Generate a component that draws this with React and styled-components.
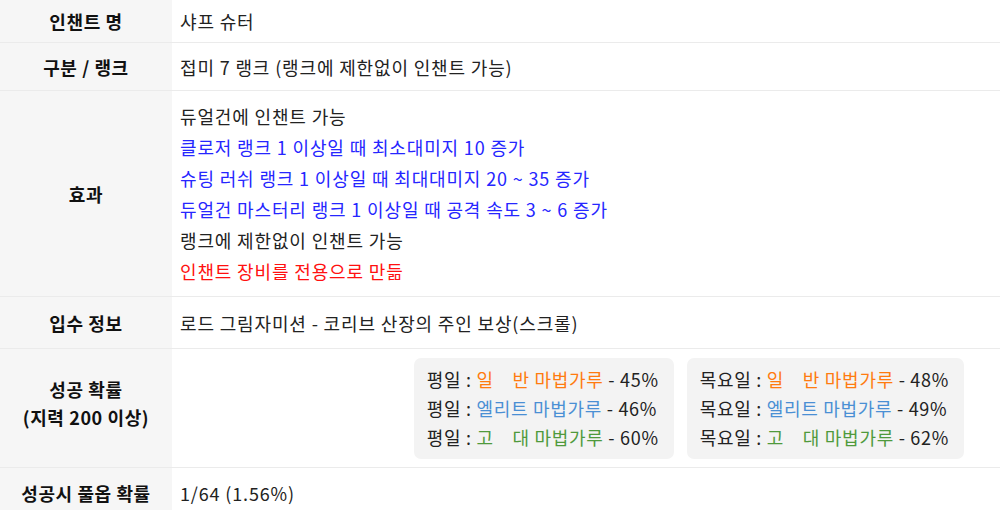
import React from "react";
import styled, { createGlobalStyle } from "styled-components";

const Global = createGlobalStyle`
  *, *::before, *::after { box-sizing: border-box; }
  html, body { margin: 0; padding: 0; background: #fff; }
  body {
    font-family: "Noto Sans CJK KR", "Noto Sans", sans-serif;
    font-size: 18px;
    letter-spacing: 0.85px;
    color: #222;
  }
`;

const Table = styled.div`
  width: 1000px;
  display: flex;
  flex-direction: column;
`;

const Row = styled.div`
  display: grid;
  grid-template-columns: 172px 1fr;
  border-bottom: 1px solid #ebebeb;
  min-height: ${(p) => p.$h}px;
`;

const Label = styled.div`
  background: #f6f6f6;
  color: #111;
  font-weight: 700;
  letter-spacing: 0.6px;
  display: flex;
  align-items: center;
  justify-content: center;
  text-align: center;
  line-height: 28px;
  padding-bottom: ${(p) => p.$lift || 0}px;
`;

const Value = styled.div`
  display: flex;
  flex-direction: column;
  justify-content: center;
  padding: ${(p) => p.$pad || "0 8px"};
  line-height: ${(p) => p.$lh || 24}px;
`;

const Line = styled.div`
  color: ${(p) => p.$c || "#222"};
`;

const BoxWrap = styled.div`
  display: flex;
  justify-content: flex-end;
  align-items: center;
  gap: 13px;
  padding-right: 36px;
`;

const Box = styled.div`
  background: #f3f3f3;
  border-radius: 7px;
  padding: 7px 15px 7px 13px;
  line-height: 29px;
  letter-spacing: 0.7px;
  min-height: 101px;
`;

const Powder = styled.span`
  color: ${(p) => p.$c};
  white-space: pre;
`;

const ORANGE = "#ff7b0f";
const SKY = "#4a8fd4";
const GREEN = "#4f9a3c";

const rates = [
  { day: "평일", items: [["일    반", ORANGE, "45%"], ["엘리트", SKY, "46%"], ["고    대", GREEN, "60%"]] },
  { day: "목요일", items: [["일    반", ORANGE, "48%"], ["엘리트", SKY, "49%"], ["고    대", GREEN, "62%"]] },
];

export default function App() {
  return (
    <>
      <Global />
      <Table>
        <Row $h={43}>
          <Label>인챈트 명</Label>
          <Value>샤프 슈터</Value>
        </Row>
        <Row $h={48}>
          <Label>구분 / 랭크</Label>
          <Value>접미 7 랭크 (랭크에 제한없이 인챈트 가능)</Value>
        </Row>
        <Row $h={206}>
          <Label>효과</Label>
          <Value $pad="10px 8px 9px" $lh={31}>
            <Line>듀얼건에 인챈트 가능</Line>
            <Line $c="#2626ff">클로저 랭크 1 이상일 때 최소대미지 10 증가</Line>
            <Line $c="#2626ff">슈팅 러쉬 랭크 1 이상일 때 최대대미지 20 ~ 35 증가</Line>
            <Line $c="#2626ff">듀얼건 마스터리 랭크 1 이상일 때 공격 속도 3 ~ 6 증가</Line>
            <Line>랭크에 제한없이 인챈트 가능</Line>
            <Line $c="#ff1010">인챈트 장비를 전용으로 만듦</Line>
          </Value>
        </Row>
        <Row $h={52}>
          <Label>입수 정보</Label>
          <Value>로드 그림자미션 - 코리브 산장의 주인 보상(스크롤)</Value>
        </Row>
        <Row $h={119}>
          <Label $lift={11}>
            성공 확률
            <br />
            (지력 200 이상)
          </Label>
          <BoxWrap>
            {rates.map((r) => (
              <Box key={r.day}>
                {r.items.map(([name, c, pct]) => (
                  <div key={name}>
                    {r.day} : <Powder $c={c}>{name} 마법가루</Powder> - {pct}
                  </div>
                ))}
              </Box>
            ))}
          </BoxWrap>
        </Row>
        <Row $h={50}>
          <Label>성공시 풀옵 확률</Label>
          <Value>1/64 (1.56%)</Value>
        </Row>
      </Table>
    </>
  );
}
